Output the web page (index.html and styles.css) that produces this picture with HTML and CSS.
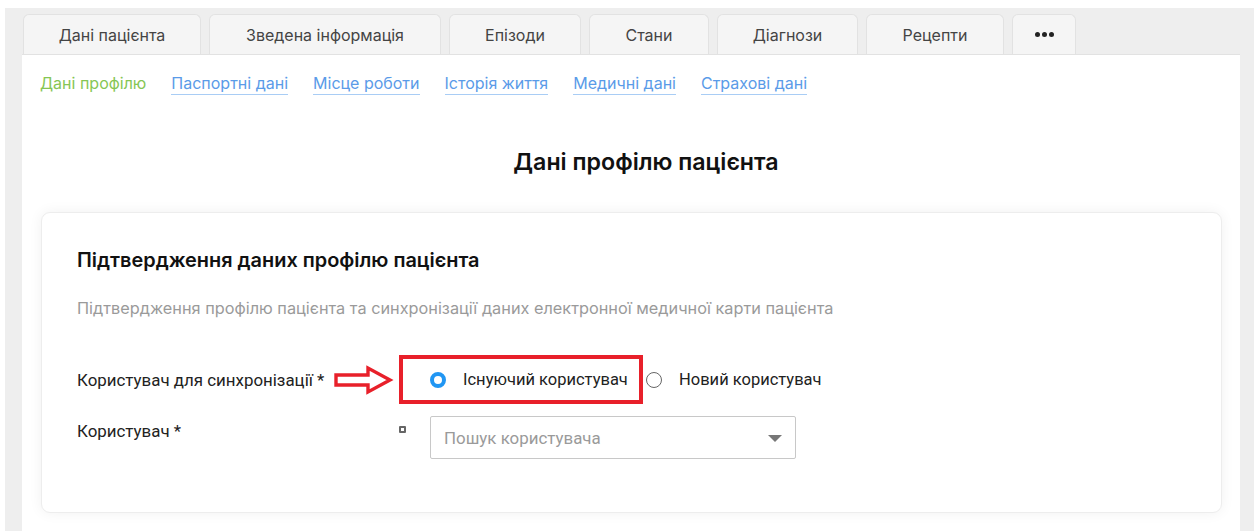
FILE: index.html
```html
<!DOCTYPE html>
<html lang="uk">
<head>
<meta charset="utf-8">
<title>Дані пацієнта</title>
<link rel="stylesheet" href="styles.css">
</head>
<body>
<div class="shell">
  <nav class="tabs">
    <div class="tab t1">Дані пацієнта</div>
    <div class="tab t2">Зведена інформація</div>
    <div class="tab t3">Епізоди</div>
    <div class="tab t4">Стани</div>
    <div class="tab t5">Діагнози</div>
    <div class="tab t6">Рецепти</div>
    <div class="tab t7"><span class="dots"><i></i><i></i><i></i></span></div>
  </nav>
  <main class="panel">
    <div class="subnav">
      <span class="sub active">Дані профілю</span>
      <a class="sub">Паспортні дані</a>
      <a class="sub">Місце роботи</a>
      <a class="sub">Історія життя</a>
      <a class="sub">Медичні дані</a>
      <a class="sub">Страхові дані</a>
    </div>
    <h1 class="page-title">Дані профілю пацієнта</h1>
    <section class="card">
      <h2 class="card-title">Підтвердження даних профілю пацієнта</h2>
      <p class="card-desc">Підтвердження профілю пацієнта та синхронізації даних електронної медичної карти пацієнта</p>
      <div class="form-row row-sync">
        <div class="label">Користувач для синхронізації *</div>
        <div class="radios">
          <div class="highlight">
            <svg class="arrow" width="60" height="30" viewBox="0 0 60 30">
              <path d="M2 10 H34 V3 L56 15 L34 27 V20 H2 Z" fill="#fff" stroke="#e8202a" stroke-width="3.4" stroke-linejoin="miter"/>
            </svg>
            <label class="radio"><span class="dot on"></span>Існуючий користувач</label>
          </div>
          <label class="radio"><span class="dot"></span>Новий користувач</label>
        </div>
      </div>
      <div class="form-row row-user">
        <div class="label">Користувач *</div>
        <div class="control">
          <span class="mini-icon"></span>
          <div class="select">
            <span class="placeholder">Пошук користувача</span>
            <span class="caret"></span>
          </div>
        </div>
      </div>
    </section>
  </main>
</div>
</body>
</html>
```

FILE: styles.css
```css
* { box-sizing: border-box; }

html, body {
  margin: 0;
  padding: 0;
  background: #fff;
  height: 100%;
  overflow: hidden;
}

body {
  font-family: "Inter", "Roboto", sans-serif;
  color: #333;
}

.shell {
  margin: 8px 5px 0 5px;
  background: #eeeeee;
  padding: 6px 14px 0 17px;
  height: 600px;
}

/* top tab strip */
.tabs {
  display: flex;
  gap: 8px;
  height: 40px;
  padding-left: 1px;
}

.tab {
  height: 40px;
  background: #f5f5f5;
  border: 1px solid #e2e2e2;
  border-bottom: none;
  border-radius: 6px 6px 0 0;
  display: flex;
  align-items: center;
  justify-content: center;
  font-size: 16px;
  color: #444;
}
.t1 { width: 178px; }
.t2 { width: 232px; }
.t3 { width: 132px; }
.t4 { width: 120px; }
.t5 { width: 141px; }
.t6 { width: 138px; }
.t7 { width: 64px; }

.dots { display: flex; gap: 2px; }
.dots i {
  display: block;
  width: 5px;
  height: 5px;
  border-radius: 50%;
  background: #222;
}

/* white content area */
.panel {
  background: #fff;
  border-top: 1px solid #e2e2e2;
  height: 540px;
}

.subnav {
  display: flex;
  gap: 25px;
  padding: 18px 0 0 18px;
  height: 46px;
  font-size: 16px;
}

.sub {
  color: #5a9be8;
  text-decoration: none;
  border-bottom: 1px solid #a9cdf5;
  line-height: 20px;
  height: 22px;
}
.sub.active {
  color: #86c654;
  border-bottom: none;
}

.page-title {
  margin: 0;
  padding-top: 47px;
  text-align: center;
  font-size: 23.2px;
  font-weight: 600;
  color: #111;
  line-height: 28px;
  padding-left: 30px;
}

.card {
  margin: 36px 18px 0 19px;
  height: 301px;
  border-radius: 9px;
  background: #fff;
  border: 1px solid #ededed;
  box-shadow: 0 0 14px rgba(0,0,0,0.06);
  padding: 34px 0 0 35px;
}

.card-title {
  margin: 0;
  font-size: 19.9px;
  font-weight: 600;
  color: #111;
  line-height: 26px;
}

.card-desc {
  margin: 25px 0 0 0;
  font-size: 16.3px;
  color: #9a9a9a;
  line-height: 20px;
}

.form-row {
  display: grid;
  grid-template-columns: 322px 1fr;
  font-family: "Roboto", sans-serif;
}

.label {
  font-size: 16.9px;
  color: #222;
}

.row-sync {
  margin-top: 37px;
  align-items: center;
}

.radios {
  display: flex;
  align-items: center;
}

.highlight {
  position: relative;
  border: 4px solid #e8202a;
  width: 244px;
  height: 49px;
  display: flex;
  align-items: center;
  padding-left: 27px;
}

.arrow {
  position: absolute;
  left: -69px;
  top: 6px;
}

.radio {
  display: flex;
  align-items: center;
  font-size: 16.5px;
  color: #222;
}

.dot {
  width: 16px;
  height: 16px;
  border-radius: 50%;
  border: 1.5px solid #666;
  margin-right: 17px;
  background: #fff;
}
.dot.on {
  border: 4.5px solid #2196f3;
}

.highlight + .radio {
  margin-left: 3px;
}

.row-user {
  margin-top: 12px;
}
.row-user .label {
  padding-top: 5px;
}

.control {
  display: flex;
  align-items: flex-start;
}

.mini-icon {
  width: 7px;
  height: 7px;
  border: 2px solid #666;
  margin: 10px 24px 0 0;
  border-radius: 1px;
}

.select {
  width: 366px;
  height: 43px;
  border: 1px solid #c8c8c8;
  border-radius: 2px;
  display: flex;
  align-items: center;
  justify-content: space-between;
  padding: 0 13px 0 13px;
}

.placeholder {
  font-size: 16.9px;
  color: #9a9a9a;
}

.caret {
  width: 0;
  height: 0;
  border-left: 7px solid transparent;
  border-right: 7px solid transparent;
  border-top: 7px solid #777;
  margin-top: 1px;
}
```
